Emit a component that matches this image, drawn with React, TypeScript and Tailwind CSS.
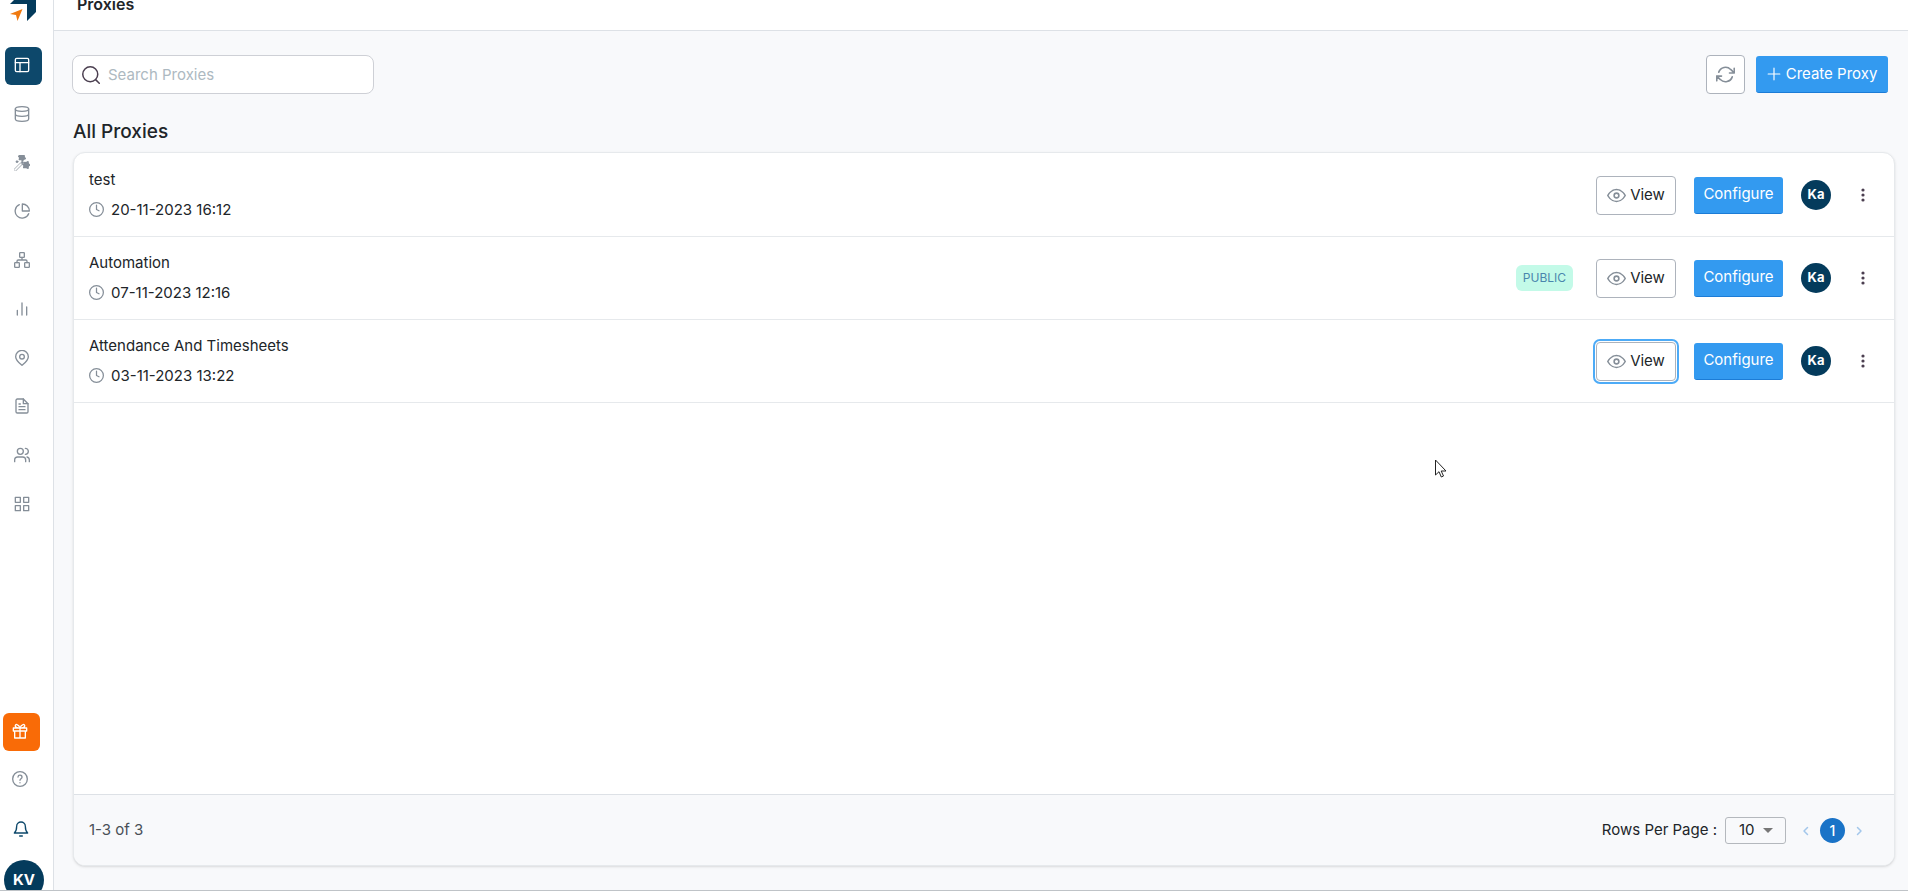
import { useState } from "react";
import { clsx } from "clsx";

type IconProps = { className?: string; children: React.ReactNode };

function Icon({ className, children }: IconProps) {
  return (
    <svg
      viewBox="0 0 24 24"
      fill="none"
      stroke="currentColor"
      strokeWidth="2"
      strokeLinecap="round"
      strokeLinejoin="round"
      aria-hidden="true"
      className={clsx("shrink-0", className)}
    >
      {children}
    </svg>
  );
}

const navItems = [
  {
    name: "Proxies",
    icon: (
      <>
        <rect x="2" y="2" width="20" height="20" rx="2" />
        <path d="M2 8.5h20M9 8.5V22" />
      </>
    ),
  },
  {
    name: "Data",
    icon: (
      <>
        <ellipse cx="12" cy="4.5" rx="10" ry="3.5" />
        <path d="M2 4.5v15c0 2 4.5 3.5 10 3.5s10-1.5 10-3.5v-15M2 12c0 2 4.5 3.5 10 3.5s10-1.5 10-3.5" />
      </>
    ),
  },
  {
    name: "Magic",
    icon: (
      <>
        <path d="M1.500 22.500 10 14" stroke="#bcc1c6" strokeWidth="5" />
        <path d="M1.500 22.500 10 14" stroke="#ffffff" strokeWidth="2" />
        <path
          d="m9 0 3 1 3-1 .5 3L17 5.500l-2.500 1-1.500 2-2-1.500H8L8.500 4 7 2zM16 11l2.500.5L21 10l.5 3L24 15l-2.500 1.500L21 20l-3-1.500-3.500.5.5-3-2-2.500 3-.5z"
          fill="currentColor"
        />
        <circle cx="4.500" cy="10" r="1.500" fill="currentColor" strokeWidth="1" />
        <circle cx="12.500" cy="11" r="1.500" fill="currentColor" strokeWidth="1" />
      </>
    ),
  },
  {
    name: "Charts",
    icon: (
      <>
        <path d="M8 2.5a10.500 10.500 0 1 0 14 13.500" />
        <path d="M12.5 1.5v10.500H23A10.500 10.500 0 0 0 12.500 1.500z" />
      </>
    ),
  },
  {
    name: "Workflow",
    icon: (
      <>
        <rect x="8.5" y="1" width="7" height="7" rx="1" />
        <rect x="1" y="16" width="7" height="7" rx="1" />
        <rect x="16" y="16" width="7" height="7" rx="1" />
        <path d="M4.5 16v-2a2 2 0 0 1 2-2h11a2 2 0 0 1 2 2v2M12 8v4" />
      </>
    ),
  },
  { name: "Reports", icon: <path d="M5 21v-7M12 21V3M19 21V9" /> },
  {
    name: "Locations",
    icon: (
      <>
        <path d="M12 23c4-3.5 9.5-7.5 9.5-13a9.5 9.5 0 0 0-19 0c0 5.5 5.5 9.5 9.500 13z" />
        <circle cx="12" cy="10" r="3.5" />
      </>
    ),
  },
  {
    name: "Documents",
    icon: (
      <>
        <path d="M14 1.5H5a2 2 0 0 0-2 2v17a2 2 0 0 0 2 2h14a2 2 0 0 0 2-2v-12z" />
        <path d="M14 1.5v7h7M7.500 9h2M7.500 13h9M7.500 17.500h9" />
      </>
    ),
  },
  {
    name: "Users",
    icon: (
      <>
        <circle cx="9.5" cy="6.5" r="4.5" />
        <path d="M1 22v-2.5a4.5 4.5 0 0 1 4.5-4.5h7.5a4.5 4.5 0 0 1 4.5 4.5V22M17 2a4.5 4.5 0 0 1 0 9M19.500 15a4.500 4.500 0 0 1 3.500 4.500V22" />
      </>
    ),
  },
  {
    name: "Apps",
    icon: (
      <>
        <rect x="2" y="2" width="7.5" height="7.5" />
        <rect x="14.5" y="2" width="7.5" height="7.5" />
        <rect x="2" y="14.5" width="7.5" height="7.5" />
        <rect x="14.5" y="14.5" width="7.5" height="7.5" />
      </>
    ),
  },
];

const proxies = [
  { name: "test", date: "20-11-2023 16:12", isPublic: false, focused: false },
  { name: "Automation", date: "07-11-2023 12:16", isPublic: true, focused: false },
  { name: "Attendance And Timesheets", date: "03-11-2023 13:22", isPublic: false, focused: true },
];

function Sidebar() {
  const [active, setActive] = useState("Proxies");

  return (
    <aside className="flex w-[54px] shrink-0 flex-col border-r border-[#dde1e6] bg-white">
      <div className="h-[47px] shrink-0 overflow-hidden">
        <svg viewBox="0 0 54 47" className="h-[47px] w-[54px]" role="img" aria-label="Logo">
          <path d="M10 4 18 -4H36V12L27 21V4z" fill="#043b5c" />
          <path d="M10 14 22.500 9 17.500 21 16 15z" fill="#f07a0f" />
        </svg>
      </div>
      <nav className="flex h-[477px] flex-col justify-between pl-[5px]">
        {navItems.map((item) => (
          <button
            type="button"
            key={item.name}
            aria-label={item.name}
            onClick={() => setActive(item.name)}
            className={clsx(
              "flex h-[38px] w-[37px] items-center rounded-md pb-[2px] pl-[9px]",
              item.name === active ? "bg-[#0d486b] text-white" : "text-[#858e98]"
            )}
          >
            <Icon className="size-4">{item.icon}</Icon>
          </button>
        ))}
      </nav>
      <div className="mt-auto flex h-[177px] flex-col overflow-hidden pl-[3px]">
        <button
          type="button"
          aria-label="Rewards"
          className="flex h-[38px] w-[37px] shrink-0 items-center rounded-md bg-[#f96b07] pb-[2px] pl-[9px] text-white"
        >
          <Icon className="size-4">
            <path d="M2 7.5h20V12H2zM4 12v10.500h16V12M12 7.500v15M12 7.500C10 1 4 1 5 5c.5 1.500 2 2.500 7 2.500zM12 7.500c2-6.500 8-6.500 7-2.500-.5 1.500-2 2.500-7 2.500z" />
          </Icon>
        </button>
        <button
          type="button"
          aria-label="Help"
          className="mt-[9px] flex h-[38px] w-[37px] shrink-0 items-center pl-[9px] text-[#858e98]"
        >
          <Icon className="size-4">
            <circle cx="12" cy="12" r="11" />
            <path d="M9 9a3 3 0 0 1 6 .5c0 2-3 2.500-3 4.500M12 17.500v.1" />
          </Icon>
        </button>
        <button
          type="button"
          aria-label="Notifications"
          className="mt-3 flex h-[38px] w-[37px] shrink-0 items-center pl-[10px] text-[#0d486b]"
        >
          <Icon className="size-4">
            <path d="M18.500 8a6.500 6.500 0 0 0-13 0c0 7-3.500 10-3.500 10h20s-3.500-3-3.500-10M10 22.500h4" />
          </Icon>
        </button>
        <button
          type="button"
          aria-label="Account"
          className="mt-3 ml-px size-10 shrink-0 rounded-full bg-[#043b5c] text-[15px] font-bold text-white"
        >
          KV
        </button>
      </div>
    </aside>
  );
}

function ProxyRow({ proxy }: { proxy: (typeof proxies)[number] }) {
  return (
    <li className="flex h-[83px] items-center border-b border-[#e6e9ec] pr-[21px] pl-[15px]">
      <div className="flex flex-col gap-2 pb-px">
        <h3 className="text-[15px] leading-[22px] text-[#212529]">{proxy.name}</h3>
        <p className="flex items-center gap-[7px] text-[15px] leading-[22px] text-[#212529]">
          <Icon className="size-[15px] text-[#858e98]">
            <circle cx="12" cy="12" r="11" />
            <path d="M12 5v7l4 2" />
          </Icon>
          {proxy.date}
        </p>
      </div>
      <div className="ml-auto flex items-center">
        {proxy.isPublic && (
          <span className="mr-[23px] rounded-md bg-[#c3fae8] px-[7px] text-xs leading-[26px] text-[#4a86ad]">
            PUBLIC
          </span>
        )}
        <button
          type="button"
          className={clsx(
            "flex h-[39px] w-20 items-center justify-center gap-1 rounded-[4px] border border-[#adb3bc] bg-white text-[15px] text-[#212529]",
            proxy.focused && "outline-2 outline-offset-1 outline-[#4dabf7]"
          )}
        >
          <Icon className="size-[19px] text-[#858e98]">
            <path d="M1 12s4-7.500 11-7.500S23 12 23 12s-4 7.500-11 7.500S1 12 1 12z" />
            <circle cx="12" cy="12" r="3" />
          </Icon>
          View
        </button>
        <button
          type="button"
          className="ml-[18px] h-[37px] w-[89px] rounded-[3px] border-b border-[#1c7cd6] bg-[#339af0] text-[15px] text-white"
        >
          Configure
        </button>
        <span className="ml-[18px] flex size-[30px] items-center justify-center rounded-full bg-[#043b5c] text-[13px] font-bold text-white">
          Ka
        </span>
        <button type="button" aria-label="More actions" className="ml-[22px] text-[#4b3f50]">
          <svg viewBox="0 0 20 20" fill="currentColor" className="size-5">
            <circle cx="10" cy="5" r="1.6" />
            <circle cx="10" cy="10" r="1.6" />
            <circle cx="10" cy="15" r="1.6" />
          </svg>
        </button>
      </div>
    </li>
  );
}

function Pagination() {
  const [rows, setRows] = useState("10");

  return (
    <footer className="flex h-[71px] items-center border-t border-[#dde1e6] bg-[#f8f9fb] pt-px pr-[29px] pl-[15px] text-[15px] text-[#212529]">
      <p className="text-[#495057]">1-3 of 3</p>
      <label htmlFor="rows-per-page" className="ml-auto">
        Rows Per Page :
      </label>
      <div className="relative ml-2">
        <select
          id="rows-per-page"
          value={rows}
          onChange={(e) => setRows(e.target.value)}
          className="block h-[27px] w-[61px] appearance-none rounded-[3px] border border-[#b4b8bd] bg-[#f8f9fb] pl-[13px]"
        >
          <option value="10">10</option>
          <option value="25">25</option>
          <option value="50">50</option>
        </select>
        <svg
          viewBox="0 0 10 5"
          fill="#777777"
          className="pointer-events-none absolute top-[11px] right-[13px] h-[5px] w-[10px]"
        >
          <path d="M0 0h10L5 5z" />
        </svg>
      </div>
      <button type="button" aria-label="Previous page" className="ml-[14px] text-[#a3c7eb]">
        <Icon className="size-3">
          <path d="m15 5-7 7 7 7" strokeWidth="3" />
        </Icon>
      </button>
      <button
        type="button"
        className="mx-2 size-[25px] rounded-full bg-[#1a73c7] text-sm font-medium text-white"
      >
        1
      </button>
      <button type="button" aria-label="Next page" className="text-[#a3c7eb]">
        <Icon className="size-3">
          <path d="m9 5 7 7-7 7" strokeWidth="3" />
        </Icon>
      </button>
    </footer>
  );
}

export default function App() {
  const [search, setSearch] = useState("");

  return (
    <div className="relative flex min-h-screen border-b border-[#bfc3c7] bg-[#f8f9fb] font-[Inter,sans-serif]">
      <Sidebar />
      <div className="flex min-w-0 flex-1 flex-col">
        <header className="flex h-[31px] items-start overflow-hidden border-b border-[#dde1e6] bg-white pl-[23px]">
          <h1 className="-mt-2 text-base font-semibold text-[#212529]">Proxies</h1>
        </header>
        <main className="flex flex-1 flex-col pt-6 pr-[13px] pb-6 pl-[18px]">
          <div className="flex items-center pr-[7px]">
            <label
              htmlFor="search"
              className="flex h-[39px] w-[302px] items-center gap-2 rounded-lg border border-[#ced0d6] bg-white pl-[9px]"
            >
              <Icon className="size-[18px] text-[#4b3f50]">
                <circle cx="11" cy="11" r="10" />
                <path d="m18.500 18.500 4.500 4.500" />
              </Icon>
              <input
                id="search"
                type="text"
                value={search}
                onChange={(e) => setSearch(e.target.value)}
                placeholder="Search Proxies"
                className="min-w-0 flex-1 bg-transparent pt-px text-[15px] outline-none placeholder:text-[#adb9c1]"
              />
            </label>
            <button
              type="button"
              aria-label="Refresh"
              className="ml-auto flex size-[39px] items-center justify-center rounded-[4px] border border-[#adb3bc] bg-white text-[#858e98]"
            >
              <Icon className="size-[19px]">
                <path d="M23 4v6h-6M1 20v-6h6M3.500 9a9 9 0 0 1 15-3.400L23 10M1 14l4.500 4.400A9 9 0 0 0 20.500 15" />
              </Icon>
            </button>
            <button
              type="button"
              className="ml-[11px] flex h-[37px] w-[132px] items-center justify-center gap-[5px] rounded-[3px] border-b border-[#1c7cd6] bg-[#339af0] text-[15px] text-white"
            >
              <Icon className="size-[14px]">
                <path d="M12 2v20M2 12h20" />
              </Icon>
              Create Proxy
            </button>
          </div>
          <h2 className="mt-[25px] mb-2 pl-px text-[19px] leading-[25px] font-medium text-[#212529]">
            All Proxies
          </h2>
          <section className="ml-px flex flex-1 flex-col overflow-hidden rounded-xl border border-[#e6e9ec] bg-white shadow-sm">
            <ul className="flex-1 pt-px">
              {proxies.map((proxy) => (
                <ProxyRow key={proxy.name} proxy={proxy} />
              ))}
            </ul>
            <Pagination />
          </section>
        </main>
      </div>
      {/* mouse pointer */}
      <svg
        viewBox="0 0 12 19"
        className="pointer-events-none absolute top-[459px] left-[1435px] h-[19px] w-3"
      >
        <path
          d="M.5 1v15l3.500-3.300L6.300 18l2.200-1-2.300-5h4.800z"
          fill="#ffffff"
          stroke="#222222"
        />
      </svg>
    </div>
  );
}
